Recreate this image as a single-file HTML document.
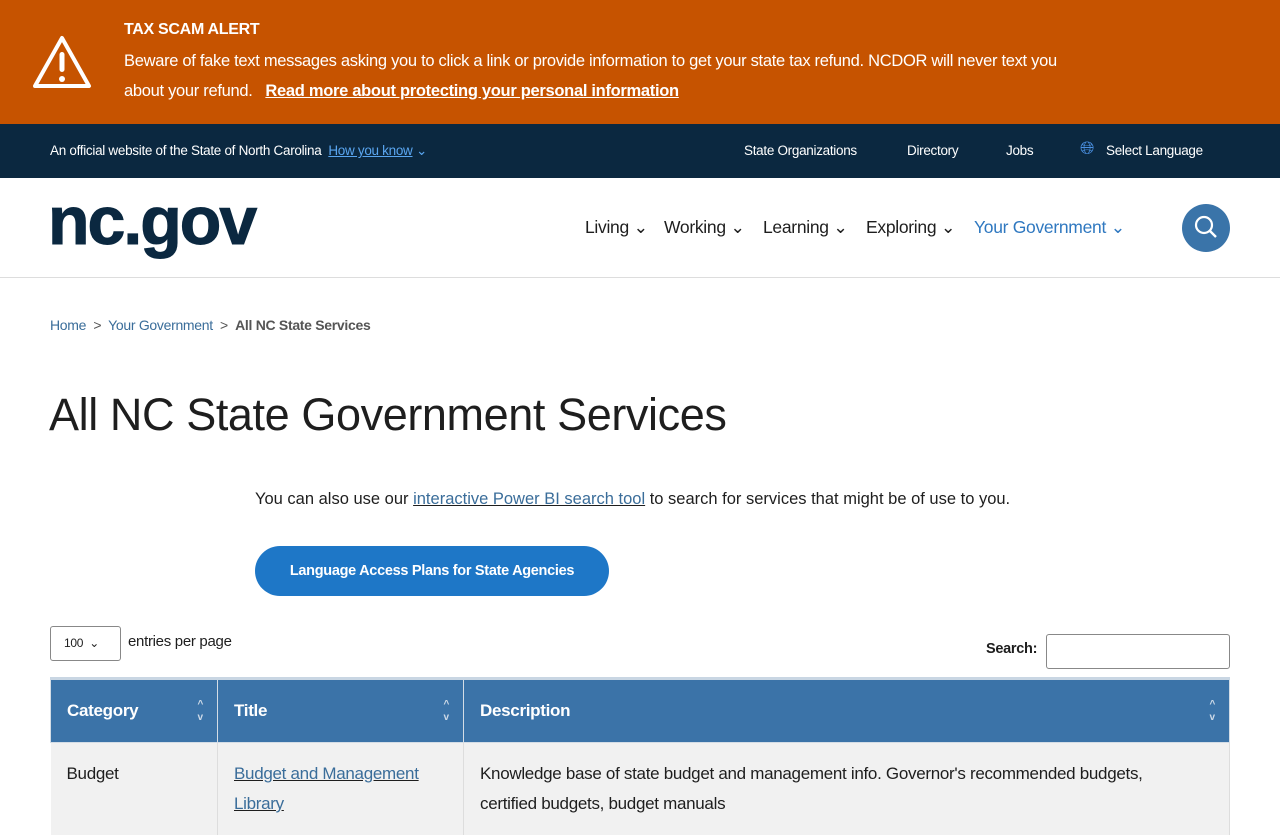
<!DOCTYPE html>
<html><head><meta charset="utf-8"><style>
*{box-sizing:border-box;margin:0;padding:0}
body{width:1280px;height:800px;overflow:hidden;font-family:"Liberation Sans",sans-serif;color:#1e1e1e;background:#fff;letter-spacing:-0.3px}
.alert{background:#c65300;height:124px;position:relative;color:#fff}
.alert svg{position:absolute;left:31px;top:34px}
.alert .t{position:absolute;left:124px;top:21px;font-weight:bold;font-size:16px}
.alert .b{position:absolute;left:124px;top:46px;font-size:16.5px;line-height:30px;width:975px}
.alert a{color:#fff;font-weight:bold;text-decoration:underline}
.top{background:#0b2840;height:54px;color:#fff;font-size:13.5px;position:relative}
.top span{position:absolute;top:19px}
.hdr{height:100px;border-bottom:1px solid #ddd;position:relative}
.logo{position:absolute;left:48px;top:182px;font-weight:900;font-size:68px;color:#0b2840;letter-spacing:-2px;-webkit-text-stroke:1px #0b2840}
.nav{position:absolute;top:217px;font-size:17.5px;color:#1e1e1e}
.nav span{position:absolute;white-space:nowrap}
.srch{position:absolute;left:1182px;top:204px;width:48px;height:48px;border-radius:50%;background:#3a74a9}
.crumb{position:absolute;top:317px;left:50px;font-size:14px;color:#3a6d9a}
h1{position:absolute;left:49px;top:389px;font-weight:normal;font-size:45px;color:#1e1e1e;letter-spacing:-0.4px}
.p{position:absolute;left:255px;top:490px;font-size:16.5px;letter-spacing:0}
.p a{color:#3a6d9a}
.btn{position:absolute;left:255px;top:546px;width:354px;height:50px;border-radius:25px;background:#1e77c7;color:#fff;font-weight:bold;font-size:14.5px;text-align:center;line-height:50px}
.sel{position:absolute;left:50px;top:626px;width:71px;height:35px;border:1px solid #888;border-radius:3px;font-size:12px;padding:9px 0 0 13px}
table{position:absolute;left:50px;top:677px;width:1180px;border-collapse:collapse;font-size:17px}
th{background:#3b73a8;color:#fff;text-align:left;height:64px;padding-left:16px;border:1px solid #d4dde6;border-top:3px solid #c9d6e3;font-size:17px;position:relative}
th i{position:absolute;right:14px;top:18px;font-style:normal;font-size:10px;line-height:13px;color:#cfdbe8}
td{background:#f1f1f1;vertical-align:top;padding:16px 16px;border-right:1px solid #ddd;height:80px;line-height:30px}
td a{color:#3a6d9a}
</style></head><body>
<div class="alert">
<svg width="62" height="56" viewBox="0 0 62 56"><path d="M31 4 L58 52 H4 Z" fill="none" stroke="#fff" stroke-width="4" stroke-linejoin="round"/><rect x="28.5" y="18" width="5" height="20" rx="2.5" fill="#fff"/><circle cx="31" cy="45" r="3" fill="#fff"/></svg>
<div class="t">TAX SCAM ALERT</div>
<div class="b">Beware of fake text messages asking you to click a link or provide information to get your state tax refund. NCDOR will never text you about your refund.&nbsp;&nbsp; <a>Read more about protecting your personal information</a></div>
</div>
<div class="top">
<span style="left:50px">An official website of the State of North Carolina&nbsp; <u style="color:#5aa6f0">How you know</u> <span style="position:static;color:#5aa6f0">⌄</span></span>
<span style="left:744px">State Organizations</span>
<span style="left:907px">Directory</span>
<span style="left:1006px">Jobs</span>
<span style="left:1080px;top:14px;color:#4a90e2;font-size:18px">🌐︎</span>
<span style="left:1106px">Select Language</span>
</div>
<div class="hdr"></div>
<div class="logo">nc.gov</div>
<div class="nav">
<span style="left:585px">Living ⌄</span>
<span style="left:664px">Working ⌄</span>
<span style="left:763px">Learning ⌄</span>
<span style="left:866px">Exploring ⌄</span>
<span style="left:974px;color:#2f78c0">Your Government ⌄</span>
</div>
<div class="srch"><svg width="48" height="48"><circle cx="22" cy="21" r="8" fill="none" stroke="#fff" stroke-width="2.2"/><line x1="28" y1="27" x2="34" y2="33" stroke="#fff" stroke-width="2.4"/></svg></div>
<div class="crumb">Home &nbsp;<span style="color:#555">&gt;</span>&nbsp; Your Government &nbsp;<span style="color:#555">&gt;</span>&nbsp; <b style="color:#555">All NC State Services</b></div>
<h1>All NC State Government Services</h1>
<div class="p">You can also use our <u><a>interactive Power BI search tool</a></u> to search for services that might be of use to you.</div>
<div class="btn">Language Access Plans for State Agencies</div>
<div class="sel">100 &nbsp;⌄</div>
<div style="position:absolute;left:128px;top:633px;font-size:15px">entries per page</div>
<div style="position:absolute;left:986px;top:641px;font-size:14.5px;font-weight:bold">Search:</div>
<div style="position:absolute;left:1046px;top:634px;width:184px;height:35px;border:1px solid #888;border-radius:3px"></div>
<table><tr><th style="width:167px">Category<i>^<br>v</i></th><th style="width:246px">Title<i>^<br>v</i></th><th>Description<i>^<br>v</i></th></tr>
<tr><td>Budget</td><td><u><a>Budget and Management Library</a></u></td><td style="padding-right:70px">Knowledge base of state budget and management info. Governor's recommended budgets, certified budgets, budget manuals</td></tr></table>
</body></html>
